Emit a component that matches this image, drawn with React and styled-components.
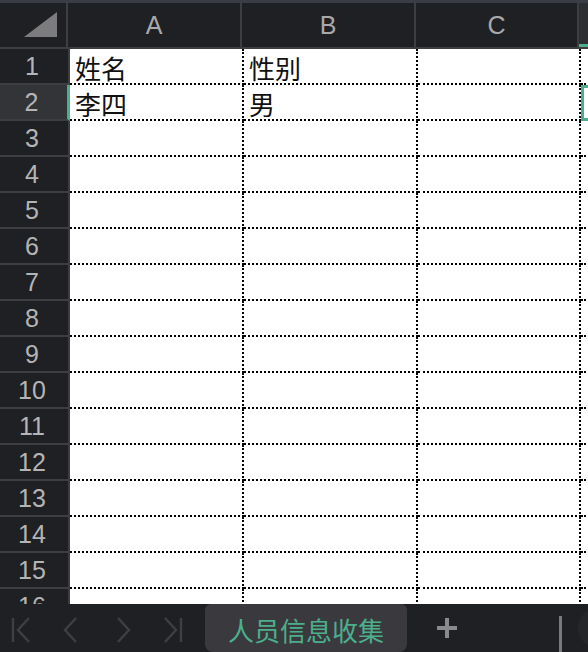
import React from 'react'
import styled, { createGlobalStyle } from 'styled-components'

const GlobalStyle = createGlobalStyle`
  html, body {
    margin: 0;
    padding: 0;
    background: #1f2023;
  }
`

const Screen = styled.div`
  width: 588px;
  height: 652px;
  display: flex;
  flex-direction: column;
  overflow: hidden;
  background: #ffffff;
  font-family: "Liberation Sans", "Noto Sans CJK SC", sans-serif;
`

const TopStrip = styled.div`
  height: 3px;
  flex-shrink: 0;
  background: #3a3d46;
`

const Grid = styled.div`
  flex: 1;
  overflow: hidden;
  display: flex;
  flex-direction: column;
`

const HeaderRow = styled.div`
  display: flex;
  height: 44px;
  flex-shrink: 0;
  background: #1f2023;
  border-bottom: 2px solid #3d3e42;
`

const Corner = styled.div`
  width: 68px;
  flex-shrink: 0;
  display: flex;
  align-items: flex-end;
  justify-content: flex-end;
  padding: 0 9px 10px 0;
  box-sizing: border-box;
  border-right: 2px solid #3d3e42;
`

const ColHead = styled.div`
  width: ${(p) => p.$w}px;
  flex-shrink: 0;
  box-sizing: border-box;
  display: flex;
  align-items: center;
  justify-content: center;
  font-size: 25px;
  color: #a9a9ab;
  border-right: 2px solid #3d3e42;
  background: ${(p) => (p.$active ? '#2d2e31' : 'transparent')};
  box-shadow: ${(p) => (p.$active ? 'inset 0 -3px 0 #4caf8c' : 'none')};
  &:last-child {
    border-right: none;
  }
`

const Row = styled.div`
  display: flex;
  height: 36px;
  flex-shrink: 0;
`

const RowHead = styled.div`
  width: 70px;
  flex-shrink: 0;
  box-sizing: border-box;
  display: flex;
  align-items: center;
  justify-content: center;
  padding-right: 4px;
  font-size: 25px;
  color: #b4b4b6;
  background: ${(p) => (p.$active ? '#333437' : '#1f2023')};
  border-right: 2px solid ${(p) => (p.$active ? '#4caf8c' : '#3d3e42')};
  border-right-width: ${(p) => (p.$active ? '3px' : '2px')};
  border-bottom: 2px solid #3d3e42;
`

const Cell = styled.div`
  width: ${(p) => p.$w}px;
  flex-shrink: 0;
  box-sizing: border-box;
  display: flex;
  align-items: center;
  padding: 3px 0 0 5px;
  font-family: "Noto Sans CJK SC", sans-serif;
  font-size: 26px;
  color: #111111;
  background: #ffffff;
  border-right: 2px dotted #000000;
  border-bottom: 2px dotted #000000;
`

const SelectedCell = styled(Cell)`
  border: 3px solid #4caf8c;
  border-right: none;
`

const TabBar = styled.div`
  height: 48px;
  flex-shrink: 0;
  display: flex;
  align-items: stretch;
  background: #1f2023;
  & > * {
    flex-shrink: 0;
  }
`

const NavGroup = styled.div`
  width: 205px;
  display: flex;
  align-items: center;
  gap: 24px;
  padding: 4px 0 0 9px;
  box-sizing: border-box;
`

const Tab = styled.div`
  width: 202px;
  display: flex;
  align-items: center;
  justify-content: center;
  padding-top: 2px;
  background: #3a3a3e;
  border-radius: 6px 6px 8px 8px;
  color: #4caf8c;
  font-family: "Noto Sans CJK SC", sans-serif;
  font-size: 26px;
`

const AddTab = styled.div`
  width: 80px;
  display: flex;
  align-items: center;
  justify-content: center;
`

const Divider = styled.div`
  width: 3px;
  margin: 12px 0 0 72px;
  background: #7a7a7c;
`

const Knob = styled.div`
  width: 40px;
  height: 40px;
  margin: 4px 0 0 16px;
  border-radius: 50%;
  background: #25262a;
`

const cols = [
  { key: 'A', w: 174 },
  { key: 'B', w: 174 },
  { key: 'C', w: 163 },
  { key: 'D', w: 80 },
]

const data = {
  1: ['姓名', '性别', '', ''],
  2: ['李四', '男', '', ''],
}

const NavIcon = ({ d }) => (
  <svg width="26" height="30" viewBox="0 0 26 30" fill="none" stroke="#3e3f43" strokeWidth="2.4">
    <path d={d} />
  </svg>
)

export default function App() {
  const rows = Array.from({ length: 16 }, (_, i) => i + 1)
  return (
    <>
      <GlobalStyle />
      <Screen>
        <TopStrip />
        <Grid>
          <HeaderRow>
            <Corner>
              <svg width="33" height="25" viewBox="0 0 33 25">
                <polygon points="33,0 33,25 0,25" fill="#7c7c7e" />
              </svg>
            </Corner>
            {cols.map((c) => (
              <ColHead key={c.key} $w={c.w} $active={c.key === 'D'}>
                {c.key !== 'D' ? c.key : ''}
              </ColHead>
            ))}
          </HeaderRow>
          {rows.map((r) => (
            <Row key={r}>
              <RowHead $active={r === 2}>{r}</RowHead>
              {cols.map((c, i) => {
                const text = data[r] ? data[r][i] : ''
                if (r === 2 && c.key === 'D') {
                  return <SelectedCell key={c.key} $w={c.w} />
                }
                return (
                  <Cell key={c.key} $w={c.w}>
                    {text}
                  </Cell>
                )
              })}
            </Row>
          ))}
        </Grid>
        <TabBar>
          <NavGroup>
            <NavIcon d="M4 3 V27 M20 3 L9 15 L20 27" />
            <NavIcon d="M17 3 L6 15 L17 27" />
            <NavIcon d="M9 3 L20 15 L9 27" />
            <NavIcon d="M6 3 L17 15 L6 27 M22 3 V27" />
          </NavGroup>
          <Tab>人员信息收集</Tab>
          <AddTab>
            <svg width="22" height="22" viewBox="0 0 22 22" stroke="#8a8a8c" strokeWidth="4">
              <path d="M11 1 V21 M1 11 H21" />
            </svg>
          </AddTab>
          <Divider />
          <Knob />
        </TabBar>
      </Screen>
    </>
  )
}
